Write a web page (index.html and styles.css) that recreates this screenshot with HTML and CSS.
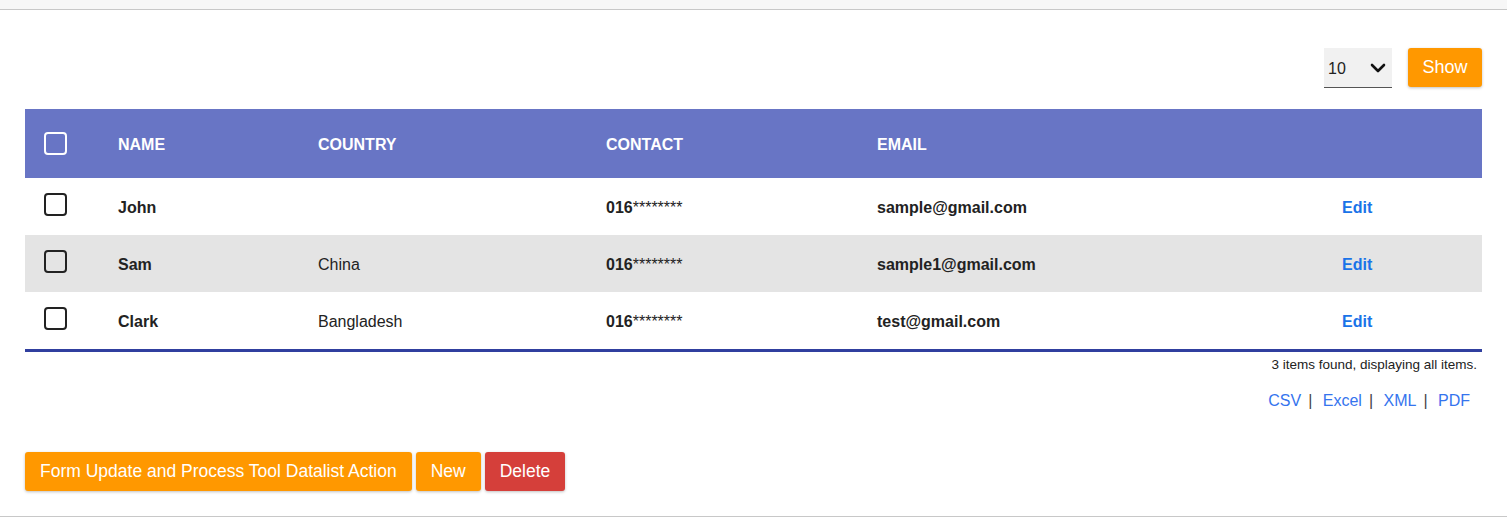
FILE: index.html
```html
<!DOCTYPE html>
<html>
<head>
<meta charset="utf-8">
<link rel="stylesheet" href="styles.css">
</head>
<body>
<div class="topbar"></div>
<div class="page">
  <div class="toolbar">
    <div class="select">
      <span class="select-value">10</span>
      <svg class="chev" width="16" height="10" viewBox="0 0 16 10"><path d="M2 2 L8 8 L14 2" fill="none" stroke="#111" stroke-width="2.6" stroke-linecap="round" stroke-linejoin="round"/></svg>
    </div>
    <button class="btn btn-orange show">Show</button>
  </div>
  <table class="grid">
    <thead>
      <tr>
        <th class="c-check"><span class="cb cb-white"></span></th>
        <th class="c-name">NAME</th>
        <th class="c-country">COUNTRY</th>
        <th class="c-contact">CONTACT</th>
        <th class="c-email">EMAIL</th>
        <th class="c-action"></th>
      </tr>
    </thead>
    <tbody>
      <tr>
        <td class="c-check"><span class="cb"></span></td>
        <td class="c-name b">John</td>
        <td class="c-country"></td>
        <td class="c-contact b">016<span class="stars">********</span></td>
        <td class="c-email b">sample@gmail.com</td>
        <td class="c-action"><a class="edit">Edit</a></td>
      </tr>
      <tr class="alt">
        <td class="c-check"><span class="cb"></span></td>
        <td class="c-name b">Sam</td>
        <td class="c-country">China</td>
        <td class="c-contact b">016<span class="stars">********</span></td>
        <td class="c-email b">sample1@gmail.com</td>
        <td class="c-action"><a class="edit">Edit</a></td>
      </tr>
      <tr>
        <td class="c-check"><span class="cb"></span></td>
        <td class="c-name b">Clark</td>
        <td class="c-country">Bangladesh</td>
        <td class="c-contact b">016<span class="stars">********</span></td>
        <td class="c-email b">test@gmail.com</td>
        <td class="c-action"><a class="edit">Edit</a></td>
      </tr>
    </tbody>
  </table>
  <div class="found">3 items found, displaying all items.</div>
  <div class="exports">
    <a>CSV</a><span class="sep">|</span>
    <a>Excel</a><span class="sep">|</span>
    <a>XML</a><span class="sep">|</span>
    <a>PDF</a>
  </div>
  <div class="actions">
    <button class="btn btn-orange">Form Update and Process Tool Datalist Action</button>
    <button class="btn btn-orange">New</button>
    <button class="btn btn-red">Delete</button>
  </div>
</div>
<div class="bottomline"></div>
</body>
</html>
```
FILE: styles.css
```css
html, body {
  margin: 0;
  padding: 0;
  background: #fff;
  font-family: "Liberation Sans", Arial, sans-serif;
  color: #222;
}
.topbar {
  height: 9px;
  background: #f7f7f7;
  border-bottom: 1px solid #c8c8c8;
}
.page {
  padding: 0 25px;
}
.toolbar {
  display: flex;
  justify-content: flex-end;
  align-items: flex-start;
  gap: 16px;
  padding-top: 38px;
  height: 61px;
  box-sizing: content-box;
}
.select {
  width: 68px;
  height: 40px;
  background: #f1f1f1;
  border-bottom: 1px solid #555;
  display: flex;
  align-items: center;
  justify-content: space-between;
  padding: 0 6px 0 4px;
  box-sizing: border-box;
}
.select-value {
  font-size: 16px;
  color: #222;
  margin-top: 2px;
}
.chev { margin-top: 1px; }
.btn {
  border: none;
  border-radius: 3px;
  color: #fff;
  font-family: "Liberation Sans", Arial, sans-serif;
  font-size: 17.5px;
  height: 39px;
  padding: 0 15px;
  box-shadow: 0 1px 3px rgba(0,0,0,0.25);
}
.btn-orange { background: #ff9800; }
.btn-red { background: #d53f3a; }
.show { width: 74px; padding: 0; font-size: 18px; }
.grid {
  width: 100%;
  border-collapse: collapse;
  table-layout: fixed;
  border-bottom: 3px solid #303f9f;
}
.grid th {
  background: #6875c5;
  color: #fff;
  font-size: 16px;
  font-weight: bold;
  text-align: left;
  height: 67px;
  padding: 2px 0 0 18px;
}
.grid td {
  font-size: 16px;
  height: 55px;
  padding: 2px 0 0 18px;
  color: #222;
}
.grid tr.alt td { background: #e4e4e4; }
.grid td.b { font-weight: bold; }
.stars { font-weight: normal; }
.c-check { width: 56px; padding-left: 19px !important; }
.c-name { width: 182px; }
.c-country { width: 270px; }
.c-contact { width: 253px; }
.c-email { width: 300px; }
.grid td.c-action { padding: 2px 0 0 165px; }
.cb {
  display: block;
  width: 23px;
  height: 23px;
  border: 2px solid #222;
  border-radius: 4px;
  box-sizing: border-box;
  margin-top: -6px;
}
.cb-white { border-color: #fff; margin-top: -2px; }
.edit {
  color: #1a73e8;
  font-weight: bold;
  font-size: 16px;
}
.found {
  text-align: right;
  font-size: 13.5px;
  padding: 5px 5px 0 0;
  color: #222;
}
.exports {
  text-align: right;
  font-size: 16px;
  padding: 20px 12px 0 0;
}
.exports a { color: #3574ee; }
.exports .sep { color: #444; margin: 0 6px 0 7px; }
.actions {
  display: flex;
  gap: 4px;
  padding-top: 42px;
  padding-bottom: 25px;
}
.bottomline {
  border-top: 1px solid #c8c8c8;
}
```
